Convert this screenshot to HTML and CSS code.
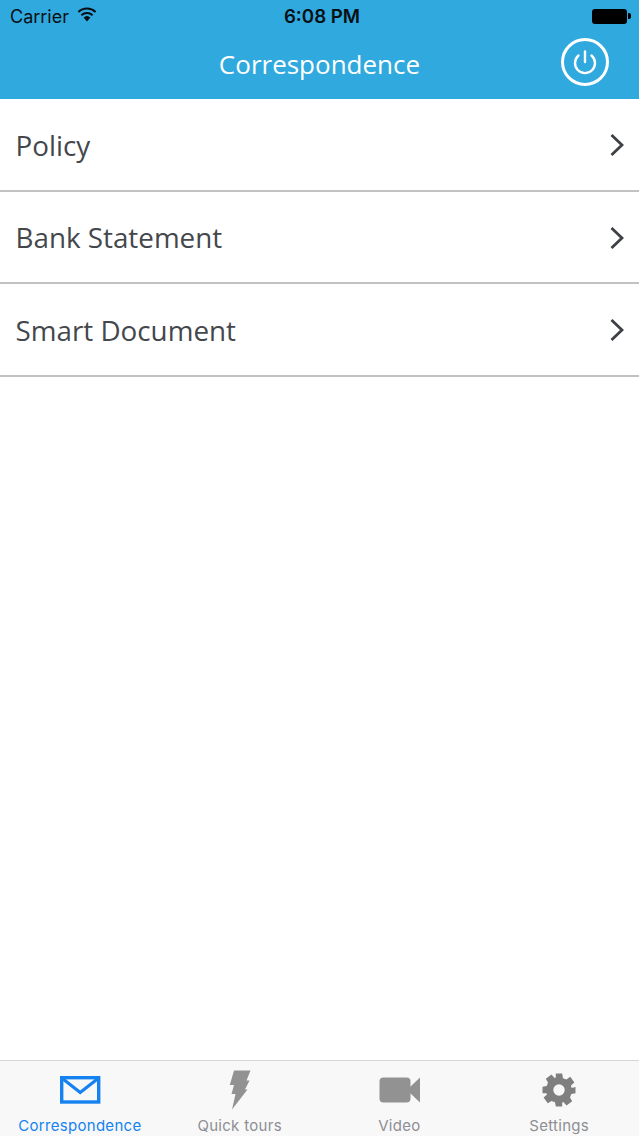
FILE: index.html
```html
<!DOCTYPE html>
<html lang="en">

<head>
    <meta charset="UTF-8">
    <meta name="viewport" content="width=device-width, initial-scale=1.0">
    <title>Correspondence</title>
    <link rel="stylesheet" href="styles.css">
</head>

<body>
    <div class="app">
        <header class="top">
            <div class="status-bar">
                <div class="status-left">
                    <span class="carrier">Carrier</span>
                    <svg class="wifi" width="20" height="15" viewBox="0 0 20 15">
                        <path d="M10 14.5 L6.6 10.6 A5 5 0 0 1 13.4 10.6 Z" fill="#0a0f14" />
                        <path d="M4.4 8.2 A8.2 8.2 0 0 1 15.6 8.2" fill="none" stroke="#0a0f14" stroke-width="2" />
                        <path d="M1.4 5 A12.6 12.6 0 0 1 18.6 5" fill="none" stroke="#0a0f14" stroke-width="2" />
                    </svg>
                </div>
                <span class="clock">6:08 PM</span>
                <div class="battery">
                    <span class="battery-body"></span>
                    <span class="battery-tip"></span>
                </div>
            </div>
            <div class="nav-bar">
                <h1>Correspondence</h1>
                <button class="power" aria-label="Log out">
                    <svg width="48" height="48" viewBox="0 0 48 48">
                        <circle cx="24" cy="24" r="22.5" fill="none" stroke="#fff" stroke-width="3" />
                        <path d="M17.5 17.5 A10 10 0 1 0 30.5 17.5" fill="none" stroke="#fff" stroke-width="2.4" stroke-linecap="round" />
                        <path d="M24 13.5 V24" fill="none" stroke="#fff" stroke-width="2.4" stroke-linecap="round" />
                    </svg>
                </button>
            </div>
        </header>

        <main class="list">
            <a class="row">
                <span>Policy</span>
                <svg class="chevron" width="14" height="22" viewBox="0 0 14 22"><path d="M1.5 1 L12 11 L1.5 21" fill="none" stroke="#3d4045" stroke-width="2.8" /></svg>
            </a>
            <a class="row">
                <span>Bank Statement</span>
                <svg class="chevron" width="14" height="22" viewBox="0 0 14 22"><path d="M1.5 1 L12 11 L1.5 21" fill="none" stroke="#3d4045" stroke-width="2.8" /></svg>
            </a>
            <a class="row">
                <span>Smart Document</span>
                <svg class="chevron" width="14" height="22" viewBox="0 0 14 22"><path d="M1.5 1 L12 11 L1.5 21" fill="none" stroke="#3d4045" stroke-width="2.8" /></svg>
            </a>
        </main>

        <nav class="tabs">
            <a class="tab active">
                <span class="tab-icon icon-mail">
                    <svg width="41" height="28" viewBox="0 0 41 28">
                        <rect x="1.700" y="1.700" width="37" height="24.300" fill="none" stroke="#1582f0" stroke-width="3.400" />
                        <path d="M3 3 L20.200 16.500 L37.400 3" fill="none" stroke="#1582f0" stroke-width="3.200" />
                    </svg>
                </span>
                <span>Correspondence</span>
            </a>
            <a class="tab">
                <span class="tab-icon icon-bolt">
                    <svg width="22" height="40" viewBox="0 0 22 40">
                        <path d="M5 0.500 H21.500 L17.500 10.500 H20.500 L16 19.500 H18.500 L3 39.500 L6.500 24 H2.500 L5 15 H0.800 Z" fill="#929292" />
                    </svg>
                </span>
                <span>Quick tours</span>
            </a>
            <a class="tab">
                <span class="tab-icon icon-video">
                    <svg width="42" height="26" viewBox="0 0 42 26">
                        <rect x="0.500" y="0.500" width="31" height="25" rx="4" fill="#929292" />
                        <path d="M31 10 L41 0.500 V25.500 L31 16 Z" fill="#929292" />
                    </svg>
                </span>
                <span>Video</span>
            </a>
            <a class="tab">
                <span class="tab-icon icon-gear">
                    <svg width="34" height="34" viewBox="0 0 34 34">
                        <path fill="#7f7f7f" fill-rule="evenodd" d="M13.800 0.500 H20.200 L21 5.200 L24.400 6.600 L28.300 3.800 L32.400 9.500 L29 12.600 L29.600 15 L33.500 14 V20.200 L29.300 21 L28 24.400 L30.200 28.300 L24.500 32.400 L21.400 29 L20.200 29.500 V33.500 H13.800 L13 29.300 L9.600 28 L5.700 30.200 L1.600 24.500 L5 21.400 L4.500 20.200 H0.500 V13.800 L4.700 13 L6 9.600 L3.800 5.700 L9.500 1.600 L12.600 5 L13.800 4.500 Z M17 11.300 A5.700 5.700 0 1 0 17 22.700 A5.700 5.700 0 1 0 17 11.300 Z" />
                    </svg>
                </span>
                <span>Settings</span>
            </a>
        </nav>
    </div>
</body>

</html>
```

FILE: styles.css
```css
html,
body {
    margin: 0;
    height: 100%;
}

body {
    font-family: "Open Sans", Arial, sans-serif;
    background-color: #fff;
    overflow: hidden;
}

.app {
    display: flex;
    flex-direction: column;
    height: 100vh;
}

.top {
    height: 99px;
    flex-shrink: 0;
    background-color: #2fa9de;
    display: flex;
    flex-direction: column;
}

.status-bar {
    height: 32px;
    padding: 0 8px 0 10px;
    display: grid;
    grid-template-columns: 1fr auto 1fr;
    align-items: center;
    font-family: Inter, Roboto, sans-serif;
    color: #0a0f14;
}

.status-left {
    display: flex;
    align-items: center;
    gap: 8px;
}

.carrier {
    font-size: 18px;
}

.wifi {
    margin-top: -3px;
}

.clock {
    font-size: 18.700px;
    font-weight: 600;
    margin-left: 3px;
}

.battery {
    justify-self: end;
    display: flex;
    align-items: center;
    gap: 1px;
}

.battery-body {
    width: 35px;
    height: 15px;
    background-color: #000;
    border-radius: 3px;
}

.battery-tip {
    width: 3px;
    height: 6px;
    background-color: #000;
    border-radius: 0 2px 2px 0;
}

.nav-bar {
    flex: 1;
    position: relative;
    display: flex;
    justify-content: center;
    align-items: center;
    padding-bottom: 3px;
}

.nav-bar h1 {
    margin: 0;
    font-size: 26px;
    font-weight: 400;
    color: #fff;
}

.power {
    position: absolute;
    right: 30.500px;
    top: 6px;
    width: 48px;
    height: 48px;
    padding: 0;
    border: none;
    background: none;
}

.list {
    flex: 1;
    background-color: #fff;
}

.row {
    height: 90.700px;
    display: flex;
    justify-content: space-between;
    align-items: center;
    padding: 0 15px 0 15.500px;
    border-bottom: 2px solid #c2c2c4;
    font-size: 27.800px;
    color: #44474c;
}

.row span {
    margin-top: 0.600px;
}

.chevron {
    margin-top: 1.500px;
}

.tabs {
    height: 75px;
    flex-shrink: 0;
    display: grid;
    grid-template-columns: repeat(4, 1fr);
    background-color: #f8f8f9;
    border-top: 1px solid #d6d6d8;
    font-family: Inter, Roboto, sans-serif;
}

.tab {
    display: flex;
    flex-direction: column;
    align-items: center;
    font-size: 15px;
    letter-spacing: 0.3px;
    color: #8e8e93;
}

.tab-icon {
    height: 46px;
    margin-top: 9px;
    display: flex;
    justify-content: center;
    align-items: flex-start;
}

.icon-mail {
    padding-top: 6px;
    margin-left: 1px;
    height: 40px;
}

.icon-bolt {
    margin-top: 9px;
    height: 46px;
}

.icon-video {
    padding-top: 7px;
    margin-left: 2px;
    height: 39px;
}

.icon-gear {
    padding-top: 3px;
    height: 43px;
}

.tab.active {
    color: #1582f0;
}
```
